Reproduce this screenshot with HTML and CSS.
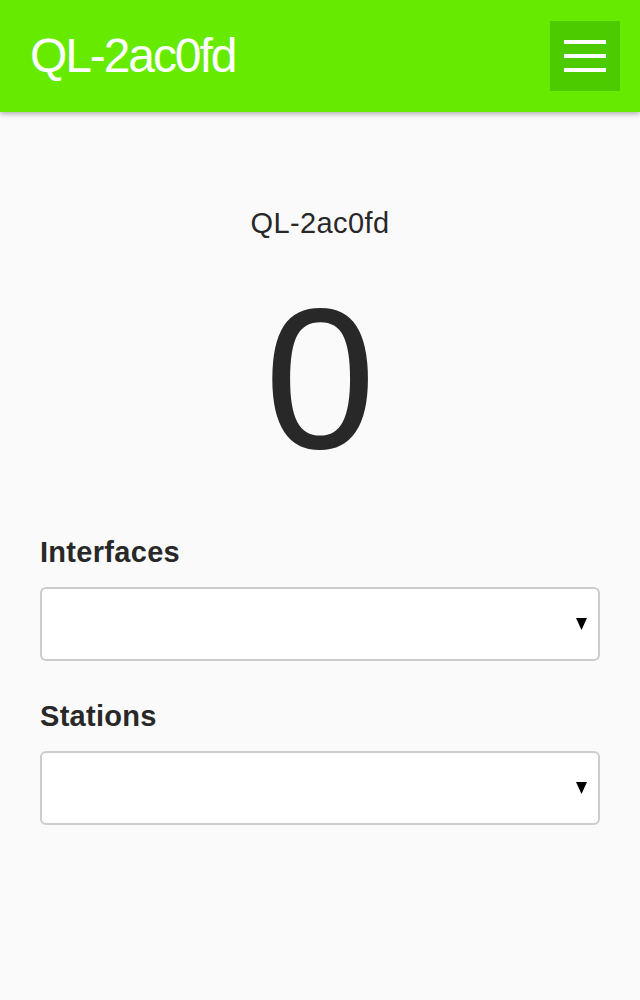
FILE: index.html
```html
<!DOCTYPE html>
<html lang="en">
<head>
<meta charset="utf-8">
<title>QL-2ac0fd</title>
<link rel="stylesheet" href="styles.css">
</head>
<body>
<header class="topbar">
  <h1 class="brand">QL-2ac0fd</h1>
  <button class="menu-btn" aria-label="Menu">
    <span class="bar"></span>
    <span class="bar"></span>
    <span class="bar"></span>
  </button>
</header>
<main class="content">
  <div class="device-name">QL-2ac0fd</div>
  <div class="counter">0</div>
  <section class="field">
    <label class="field-label">Interfaces</label>
    <div class="select"><svg class="arrow" width="11" height="12" viewBox="0 0 11 12"><polygon points="0,0 11,0 5.5,12" fill="#000"/></svg></div>
  </section>
  <section class="field field-second">
    <label class="field-label">Stations</label>
    <div class="select"><svg class="arrow" width="11" height="12" viewBox="0 0 11 12"><polygon points="0,0 11,0 5.5,12" fill="#000"/></svg></div>
  </section>
</main>
</body>
</html>
```
FILE: styles.css
```css
* { box-sizing: border-box; }
html, body { margin: 0; padding: 0; }
body {
  background: #fafafa;
  font-family: "Liberation Sans", Arial, sans-serif;
  color: #282828;
  min-height: 1000px;
}
.topbar {
  height: 112px;
  background: #66eb00;
  display: flex;
  align-items: center;
  justify-content: space-between;
  padding: 0 20px 0 30px;
  box-shadow: 0 2px 5px rgba(0,0,0,0.3);
}
.brand {
  margin: 0;
  font-weight: normal;
  font-size: 48px;
  line-height: 1;
  letter-spacing: -2.1px;
  color: #fff;
}
.menu-btn {
  width: 70px;
  height: 70px;
  background: #4ccb00;
  border: 0;
  padding: 0 14px;
  display: flex;
  flex-direction: column;
  justify-content: center;
  gap: 10px;
}
.bar {
  display: block;
  height: 4px;
  width: 42px;
  background: #fff;
}
.content {
  padding: 97px 40px 0;
}
.device-name {
  text-align: center;
  font-size: 29px;
  line-height: 1;
  letter-spacing: 0.4px;
  height: 29px;
}
.counter {
  margin-top: 41px;
  text-align: center;
  font-size: 200px;
  line-height: 1;
  height: 200px;
}
.field { margin-top: 59px; }
.field-second { margin-top: 41px; }
.field-label {
  display: block;
  font-weight: bold;
  font-size: 29px;
  line-height: 1;
  letter-spacing: 0.3px;
  height: 29px;
}
.select {
  margin-top: 20px;
  height: 74px;
  background: #fff;
  border: 2px solid #cccccc;
  border-radius: 6px;
  display: flex;
  align-items: center;
  justify-content: flex-end;
  padding: 0 11px 0 0;
}
.arrow {
  display: block;
}
```
